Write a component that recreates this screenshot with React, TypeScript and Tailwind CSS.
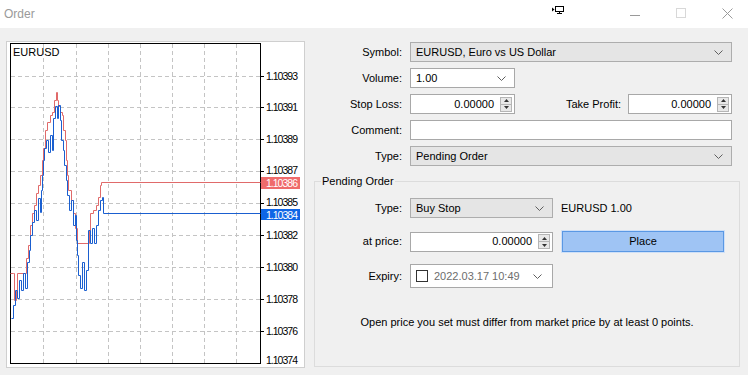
import React from 'react'

const font = { fontFamily: '"Liberation Sans", Arial, sans-serif' }

// bid / ask tick points, drawn as step lines
const askPts: [number, number][] = [
  [10, 273], [13, 273], [14, 300], [16, 290], [17, 273], [25, 273], [26, 258], [28, 245], [30, 225],
  [32, 213], [34, 205], [36, 193], [38, 185], [40, 175], [42, 160], [43, 148], [45, 130], [47, 122],
  [50, 115], [52, 112], [54, 100], [56, 92], [57, 100], [58, 106], [60, 112], [62, 115], [63, 130],
  [65, 140], [66, 160], [67, 175], [68, 190], [71, 200], [73, 213], [75, 228], [77, 243], [88, 243],
  [89, 230], [90, 213], [93, 210], [96, 205], [98, 197], [100, 185], [101, 182], [260, 182],
]

const bidPts: [number, number][] = [
  [11, 318], [13, 305], [15, 290], [17, 298], [19, 280], [21, 290], [23, 273], [25, 288], [27, 262],
  [29, 250], [30, 235], [32, 222], [34, 210], [36, 220], [38, 198], [40, 212], [41, 190], [42, 175],
  [43, 160], [44, 148], [46, 140], [48, 152], [50, 135], [52, 150], [53, 118], [55, 106], [57, 118],
  [58, 105], [60, 120], [61, 140], [63, 150], [64, 165], [66, 180], [67, 195], [69, 210], [71, 200],
  [73, 225], [75, 215], [76, 240], [77, 255], [78, 275], [80, 288], [82, 262], [84, 290], [86, 270],
  [88, 230], [90, 243], [92, 228], [94, 243], [96, 225], [98, 210], [100, 200], [102, 197], [103, 213],
  [260, 213],
]

function stepPath(pts: [number, number][]) {
  let d = `M${pts[0][0] + 0.5} ${pts[0][1] + 0.5}`
  for (let i = 1; i < pts.length; i++) {
    d += ` H${pts[i][0] + 0.5} V${pts[i][1] + 0.5}`
  }
  return d
}

const gridX = [43, 76, 108, 140, 172, 204, 236]
const gridY = [76, 107, 139, 171, 203, 235, 267, 299, 331]
const axis: [string, number][] = [
  ['1.10393', 76], ['1.10391', 107], ['1.10389', 139], ['1.10387', 170], ['1.10385', 202],
  ['1.10382', 235], ['1.10380', 267], ['1.10378', 299], ['1.10376', 331], ['1.10374', 360],
]

function Chart() {
  return (
    <div className="ml-[6px] mt-[13px] w-[299px] h-[327px] bg-white border border-[#cfcfcf] shrink-0">
      <svg width="297" height="325" viewBox="7 42 297 325" className="block" style={font}>
        {gridX.map((x) => (
          <line key={x} x1={x + 0.5} y1="44" x2={x + 0.5} y2="363" stroke="#c4c4c4" strokeDasharray="4 3" />
        ))}
        {gridY.map((y) => (
          <line key={y} x1="11" y1={y + 0.5} x2="260" y2={y + 0.5} stroke="#c4c4c4" strokeDasharray="4 3" />
        ))}
        <rect x="10.5" y="43.5" width="250" height="320" fill="none" stroke="#000" />
        {gridY.map((y) => (
          <line key={'t' + y} x1="260" y1={y + 0.5} x2="264" y2={y + 0.5} stroke="#000" />
        ))}
        <text x="13" y="56" fontSize="11" fill="#000">EURUSD</text>
        <path d={stepPath(askPts)} fill="none" stroke="#e06a6a" strokeWidth="1" />
        <path d={stepPath(bidPts)} fill="none" stroke="#1a5fd0" strokeWidth="1" />
        {axis.map(([t, y]) => (
          <text key={t} x="266" y={y + 4} fontSize="10.5" textLength="32" fill="#000">{t}</text>
        ))}
        <rect x="261" y="177" width="39" height="12" fill="#ef6b6b" />
        <text x="266" y="187" fontSize="10.5" textLength="32" fill="#fff">1.10386</text>
        <rect x="261" y="209" width="39" height="11" fill="#0f66e6" />
        <text x="266" y="218.5" fontSize="10.5" textLength="32" fill="#fff">1.10384</text>
      </svg>
    </div>
  )
}

function Chevron() {
  return (
    <svg width="9" height="5" viewBox="0 0 9 5" className="block">
      <polyline points="0.5,0.5 4.5,4.5 8.5,0.5" fill="none" stroke="#5f5f5f" />
    </svg>
  )
}

function Spin() {
  return (
    <div className="w-[12px] h-[15px] mr-[2px] flex flex-col border border-[#b5b5b5] bg-[#e8e8e8]">
      <div className="flex-1 flex items-center justify-center border-b border-[#b5b5b5]">
        <svg width="5" height="3" viewBox="0 0 5 3"><polygon points="0,3 2.5,0 5,3" fill="#333" /></svg>
      </div>
      <div className="flex-1 flex items-center justify-center">
        <svg width="5" height="3" viewBox="0 0 5 3"><polygon points="0,0 2.5,3 5,0" fill="#333" /></svg>
      </div>
    </div>
  )
}

function Combo({ value, w, white }: { value: string; w: string; white?: boolean }) {
  return (
    <div
      className={`${w} h-[20px] flex items-center pl-[5px] pr-[8px] border ${
        white ? 'bg-white border-[#a8a8a8]' : 'bg-[#e5e5e5] border-[#adadad]'
      }`}
    >
      <span className="flex-1">{value}</span>
      <Chevron />
    </div>
  )
}

function NumInput({ w }: { w: string }) {
  return (
    <div className={`${w} h-[20px] flex items-center bg-white border border-[#a8a8a8]`}>
      <span className="flex-1 text-right pr-[6px]">0.00000</span>
      <Spin />
    </div>
  )
}

function Row({ label, children, lw = 'w-[88px]' }: { label: string; children: React.ReactNode; lw?: string }) {
  return (
    <div className="flex items-center">
      <div className={`${lw} text-right shrink-0`}>{label}</div>
      <div className="ml-[8px] flex items-center">{children}</div>
    </div>
  )
}

function TitleBar() {
  return (
    <div className="h-[28px] bg-white flex items-center relative">
      <span className="ml-[4px] text-[12px] text-[#9a9a9a]">Order</span>
      <div className="flex-1" />
      <svg width="13" height="8" viewBox="0 0 13 8" className="mr-[65px] mb-[8px]">
        <polygon points="0,1.5 2.5,3.5 0,5.5" fill="#000" />
        <rect x="3.5" y="0.5" width="8" height="5" fill="none" stroke="#000" />
        <line x1="7.5" y1="5.5" x2="7.5" y2="7.5" stroke="#000" />
        <line x1="5" y1="7.5" x2="10" y2="7.5" stroke="#000" />
      </svg>
      <svg width="11" height="11" viewBox="0 0 11 11" className="mr-[35px]">
        <line x1="0" y1="6.5" x2="10" y2="6.5" stroke="#9a9a9a" />
      </svg>
      <svg width="10" height="10" viewBox="0 0 10 10" className="mr-[36px] mb-[2px]">
        <rect x="0.5" y="0.5" width="9" height="9" fill="none" stroke="#d8d8d8" />
      </svg>
      <svg width="11" height="11" viewBox="0 0 11 11" className="mr-[15px] mb-[2px]">
        <line x1="0.5" y1="0.5" x2="10.5" y2="10.5" stroke="#9a9a9a" />
        <line x1="10.5" y1="0.5" x2="0.5" y2="10.5" stroke="#9a9a9a" />
      </svg>
    </div>
  )
}

export default function App() {
  return (
    <div className="w-[748px] h-[375px] bg-[#f0f0f0] text-[11px] text-black overflow-hidden" style={font}>
      <TitleBar />
      <div className="flex items-start">
        <Chart />
        <div className="ml-[9px] mt-[14px] w-[426px] flex flex-col">
          <div className="flex flex-col gap-[6px]">
            <Row label="Symbol:">
              <Combo value="EURUSD, Euro vs US Dollar" w="w-[322px]" />
            </Row>
            <Row label="Volume:">
              <Combo value="1.00" w="w-[105px]" white />
            </Row>
            <Row label="Stop Loss:">
              <NumInput w="w-[105px]" />
              <div className="w-[106px] text-right">Take Profit:</div>
              <div className="ml-[7px]">
                <NumInput w="w-[104px]" />
              </div>
            </Row>
            <Row label="Comment:">
              <div className="w-[322px] h-[20px] bg-white border border-[#a8a8a8]" />
            </Row>
            <Row label="Type:">
              <Combo value="Pending Order" w="w-[322px]" />
            </Row>
          </div>

          <fieldset className="mt-[8px] w-[426px] h-[193px] border border-[#dcdcdc]">
            <legend className="ml-[6px] px-[1px] leading-[14px]">Pending Order</legend>
            <div className="mt-[10px] flex flex-col">
              <Row label="Type:" lw="w-[87px]">
                <Combo value="Buy Stop" w="w-[143px]" />
                <span className="ml-[8px]">EURUSD 1.00</span>
              </Row>
              <div className="mt-[13px]">
                <Row label="at price:" lw="w-[87px]">
                  <NumInput w="w-[143px]" />
                  <button className="ml-[9px] w-[162px] h-[21px] bg-[#9fc4f4] border border-[#5a98e4] outline outline-1 outline-[#cfe0f7]">
                    Place
                  </button>
                </Row>
              </div>
              <div className="mt-[12px]">
                <Row label="Expiry:" lw="w-[87px]">
                  <div className="w-[143px] h-[24px] flex items-center bg-white border border-[#a8a8a8]">
                    <div className="ml-[5px] w-[12px] h-[12px] border border-[#333] bg-white shrink-0" />
                    <span className="ml-[6px] w-[86px] whitespace-nowrap text-[#6d6d6d]">
                      2022.03.17 10:49
                    </span>
                    <div className="ml-[13px]">
                      <Chevron />
                    </div>
                  </div>
                </Row>
              </div>
              <div className="mt-[26px] text-center">
                Open price you set must differ from market price by at least 0 points.
              </div>
            </div>
          </fieldset>
        </div>
      </div>
    </div>
  )
}
